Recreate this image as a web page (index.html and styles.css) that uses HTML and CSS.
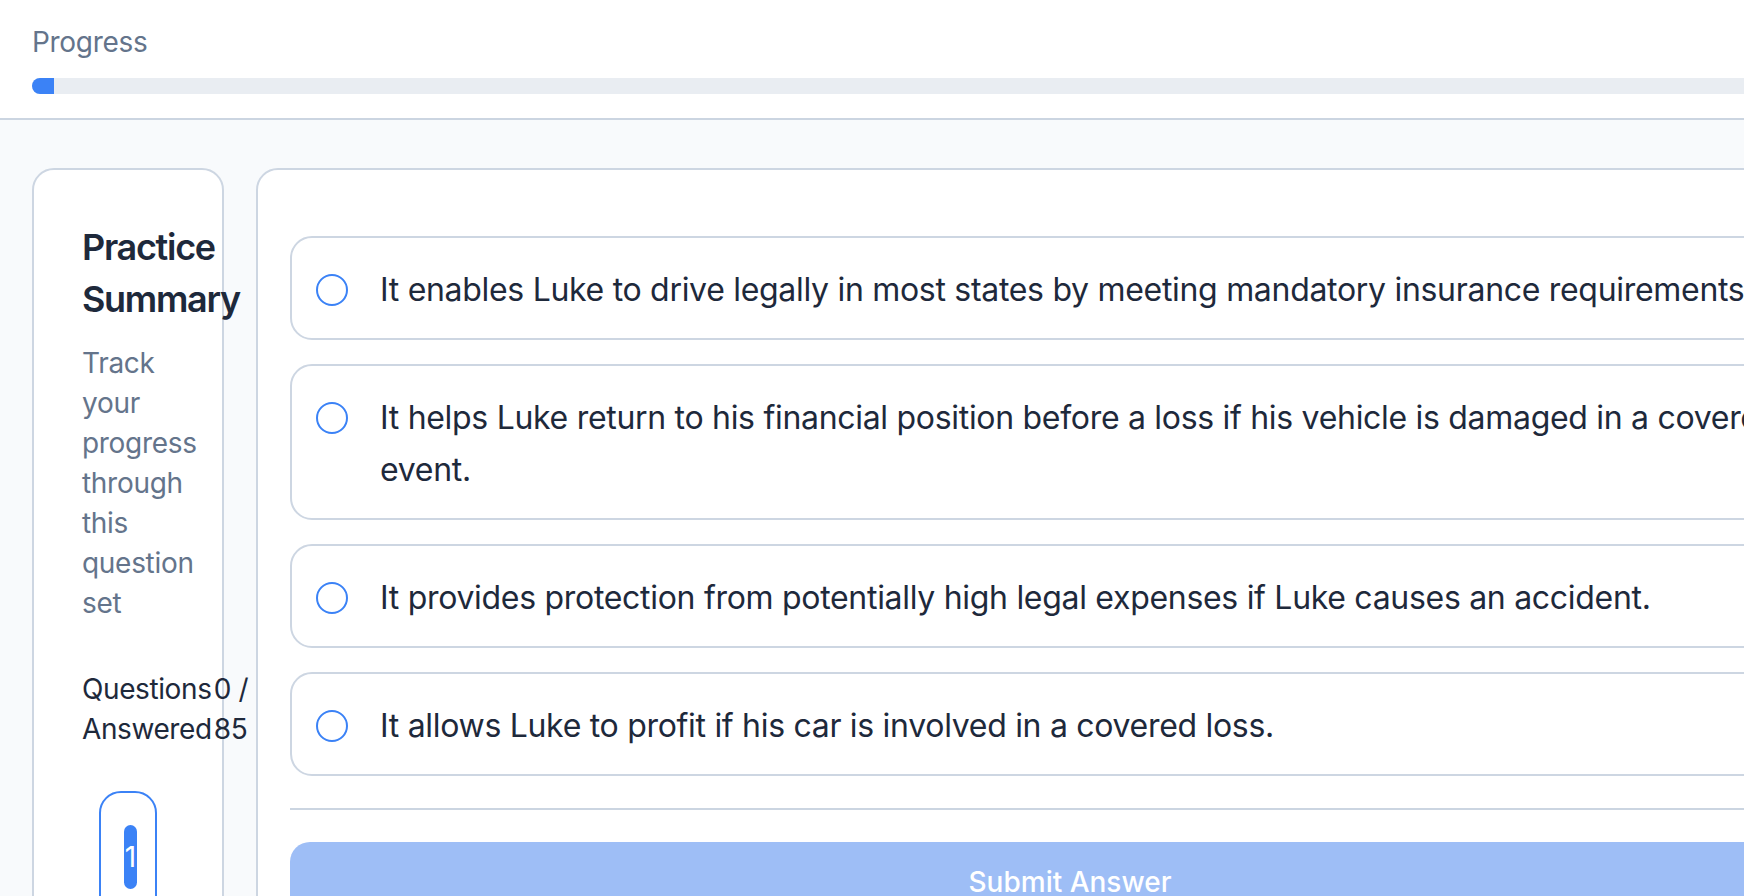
FILE: index.html
```html
<!DOCTYPE html>
<html lang="en">
<head>
<meta charset="utf-8">
<title>Practice</title>
<link rel="stylesheet" href="styles.css">
</head>
<body>
<div class="page">
  <header class="progress-header">
    <div class="progress-label">Progress</div>
    <div class="progress-track"><div class="progress-fill" style="width:1.1765%"></div></div>
  </header>
  <main class="layout">
    <aside class="summary-card">
      <h2 class="summary-title">Practice Summary</h2>
      <p class="summary-desc">Track your progress through this question set</p>
      <div class="stat">
        <span class="stat-label">Questions Answered</span>
        <span class="stat-value">0&nbsp;/ 85</span>
      </div>
      <div class="nav-box">
        <button class="q-pill" type="button">1</button>
      </div>
    </aside>
    <section class="quiz-card">
      <div class="options">
        <label class="option">
          <span class="radio"></span>
          <span class="option-text">It enables Luke to drive legally in most states by meeting mandatory insurance requirements.</span>
        </label>
        <label class="option">
          <span class="radio"></span>
          <span class="option-text">It helps Luke return to his financial position before a loss if his vehicle is damaged in a covered event.</span>
        </label>
        <label class="option">
          <span class="radio"></span>
          <span class="option-text">It provides protection from potentially high legal expenses if Luke causes an accident.</span>
        </label>
        <label class="option">
          <span class="radio"></span>
          <span class="option-text">It allows Luke to profit if his car is involved in a covered loss.</span>
        </label>
      </div>
      <hr class="divider">
      <button class="submit" type="button">Submit Answer</button>
    </section>
  </main>
</div>
</body>
</html>
```

FILE: styles.css
```css
html, body {
  margin: 0;
  padding: 0;
  overflow: hidden;
  background: #f8fafc;
}

body {
  font-family: Inter, "Liberation Sans", sans-serif;
  color: #1e293b;
}

.page {
  width: 1916px;
}

.progress-header {
  background: #ffffff;
  padding: 22px 32px 24px;
  border-bottom: 2px solid #cbd5e1;
}

.progress-label {
  font-size: 28px;
  line-height: 40px;
  letter-spacing: -0.3px;
  color: #64748b;
}

.progress-track {
  margin-top: 16px;
  height: 16px;
  border-radius: 8px;
  background: #e9edf2;
  overflow: hidden;
}

.progress-fill {
  height: 100%;
  background: #3b82f6;
}

.layout {
  display: flex;
  align-items: flex-start;
  gap: 32px;
  padding: 48px 32px;
}

.summary-card {
  flex: 0 0 192px;
  box-sizing: border-box;
  width: 192px;
  min-height: 900px;
  background: #ffffff;
  border: 2px solid #cdd6e2;
  border-radius: 22px;
  padding: 48px;
}

.summary-title {
  margin: 3px 0 0;
  font-size: 36px;
  line-height: 52px;
  font-weight: 600;
  letter-spacing: -1.3px;
  color: #1e293b;
}

.summary-desc {
  margin: 18px 0 0;
  font-size: 28px;
  line-height: 40px;
  letter-spacing: -0.3px;
  color: #64748b;
}

.stat {
  margin-top: 46px;
  display: flex;
  justify-content: space-between;
  font-size: 28px;
  line-height: 40px;
  letter-spacing: -0.4px;
  color: #1e293b;
}

.stat-value {
  padding-left: 2px;
}

.nav-box {
  margin: 42px auto 0;
  width: 58px;
  height: 200px;
  box-sizing: border-box;
  border: 2px solid #3b82f6;
  border-radius: 22px;
  padding-top: 32px;
}

.q-pill {
  display: flex;
  align-items: center;
  justify-content: center;
  margin-left: 23px;
  width: 13px;
  height: 64px;
  padding: 0;
  border: 0;
  border-radius: 7px;
  background: #3b82f6;
  color: #ffffff;
  font-family: Inter, "Liberation Sans", sans-serif;
  font-size: 28px;
  line-height: 40px;
  overflow: visible;
}

.quiz-card {
  flex: 0 0 1628px;
  box-sizing: border-box;
  min-height: 900px;
  background: #ffffff;
  border: 2px solid #cdd6e2;
  border-radius: 22px;
  padding: 66px 32px 32px;
}

.options {
  display: flex;
  flex-direction: column;
  gap: 24px;
}

.option {
  display: flex;
  align-items: flex-start;
  gap: 32px;
  padding: 26px 24px 22px;
  border: 2px solid #cdd6e2;
  border-radius: 22px;
  background: #ffffff;
  cursor: pointer;
}

.radio {
  flex: 0 0 auto;
  box-sizing: border-box;
  width: 32px;
  height: 32px;
  margin-top: 10px;
  border: 2px solid #3b82f6;
  border-radius: 50%;
}

.option-text {
  font-size: 32px;
  line-height: 52px;
  letter-spacing: -0.3px;
  color: #1e293b;
}

.divider {
  margin: 32px 0;
  border: 0;
  border-top: 2px solid #cbd5e1;
}

.submit {
  display: block;
  width: 100%;
  padding: 19px 16px 13px;
  border: 0;
  border-radius: 20px;
  background: #9ebef6;
  color: #ffffff;
  font-family: Inter, "Liberation Sans", sans-serif;
  font-size: 28px;
  line-height: 42px;
  font-weight: 500;
}
```
